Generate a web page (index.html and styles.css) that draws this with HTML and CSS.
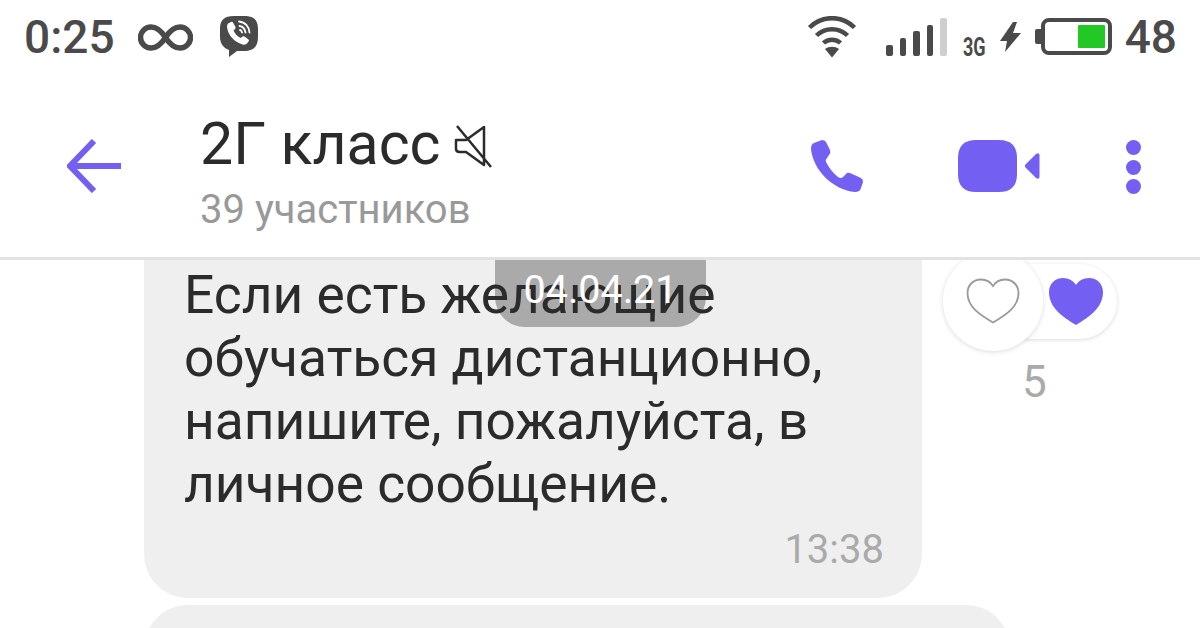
FILE: index.html
```html
<!DOCTYPE html>
<html lang="ru">
<head>
    <meta charset="UTF-8">
    <meta name="viewport" content="width=device-width, initial-scale=1.0">
    <title>2Г класс</title>
    <link rel="stylesheet" href="styles.css">
</head>
<body>
    <div class="status">
        <span class="clock">0:25</span>
        <svg class="ic-inf" width="55" height="27" viewBox="0 0 55 27"><path d="M27.5 13.5C23 6.500 19 3 13 3a10.500 10.500 0 0 0 0 21C19 24 23 20.500 27.500 13.500S36 3 42 3a10.500 10.500 0 0 1 0 21C36 24 32 20.500 27.500 13.500Z" fill="none" stroke="#4a4a4a" stroke-width="5.500"/></svg>
        <svg class="ic-viber" width="38" height="41" viewBox="0 0 38 41">
            <path d="M14 0h10c10 0 14 4 14 13v8c0 10-5 14-14 14h-7l-8 6v-7C3 32 0 27 0 21v-8C0 4 4 0 14 0Z" fill="#4a4a4a"/>
            <path d="M8 7.500l3-1.500q1.500-.5 2 .5l2.500 4.500q.5 1-.5 2l-1.500 1.500q2 4.500 7 7.500l2-1.500q1-.5 2 0l4 3q1 1 0 2l-2 2.500q-2 1-4 .5C14 26 8 19 7 11q0-2.500 1-3.500Z" fill="#fff"/>
            <path d="M19 5.500c6 .5 10 5 10.500 11M19.500 10c3.500 .5 5.500 3 6 6.500M20 14c1.500 .3 1.800 1 2 2.500" fill="none" stroke="#fff" stroke-width="1.800" stroke-linecap="round"/>
        </svg>
        <div class="spacer"></div>
        <svg class="ic-wifi" width="50" height="42" viewBox="0 0 50 42">
            <path d="M2.500 11.500C15-1 35-1 47.500 11.500M9.500 19.500C18 11 32 11 40.500 19.500M16.500 27C21 22.500 29 22.500 33.500 27" fill="none" stroke="#4a4a4a" stroke-width="4.500"/>
            <path d="M18 33c4-3 10-3 14 0l-7 8.500Z" fill="#4a4a4a"/>
        </svg>
        <div class="signal">
            <i class="bar b1"></i><i class="bar b2"></i><i class="bar b3"></i><i class="bar b4"></i><i class="bar b5"></i>
        </div>
        <span class="net">3G</span>
        <svg class="ic-bolt" width="21" height="30" viewBox="0 0 21 30"><path d="M13 0L0 19h7L5 30l16-19h-8l4-11Z" fill="#4a4a4a"/></svg>
        <div class="battery"><div class="battery-level"></div></div>
        <span class="percent">48</span>
    </div>

    <div class="header">
        <svg class="ic-back" width="54" height="54" viewBox="0 0 54 54"><path d="M27 2L3 27l24 25M3 27h51" fill="none" stroke="#7360f2" stroke-width="6"/></svg>
        <div class="chat-info">
            <div class="chat-title">
                <span>2Г класс</span>
                <svg width="38" height="44" viewBox="0 0 38 44"><path d="M2 16l10 0L30 3v38L12 28H6q-4 0-4-3ZM3 2l34 41" fill="none" stroke="#2b2b2b" stroke-width="2.500" stroke-linejoin="round"/></svg>
            </div>
            <div class="chat-sub">39 участников</div>
        </div>
        <svg class="ic-phone" width="52" height="52" viewBox="0 0 52 52"><path d="M3 3Q0 4 0 9C2 30 22 50 44 52Q49 52 50 48L52 42Q52 39 50 38L39 33Q36 32 35 34L32 37Q30 39 27 37C22 33 18 28 15 22Q14 20 16 18L18 15Q20 13 19 10L15 2Q14 0 11 0Z" fill="#7360f2"/></svg>
        <svg class="ic-video" width="82" height="52" viewBox="0 0 82 52"><path d="M18 0h23c12 0 18 6 18 18v16c0 12-6 18-18 18H18C6 52 0 46 0 34V18C0 6 6 0 18 0Z" fill="#7360f2"/><path d="M67.500 24.500L78 14q3-2 3.500 1v22q-.5 3-3.500 1L67.500 27.500q-1.500-1.500 0-3Z" fill="#7360f2"/></svg>
        <div class="dots"><i></i><i></i><i></i></div>
    </div>

    <div class="chat">
        <div class="date-pill"><span>04.04.21</span></div>
        <div class="msg-row">
            <div class="bubble">
                <p class="msg-text">Если есть желающие обучаться дистанционно, напишите, пожалуйста, в личное сообщение.</p>
                <div class="msg-time">13:38</div>
            </div>
            <div class="likes">
                <div class="like-row">
                    <div class="like-circle">
                        <svg width="54" height="46" viewBox="0 0 54 46"><path d="M27 44.500C14 37 1.500 29 1.500 15 1.500 7 7.500 1.500 15 1.500 20 1.500 24.500 4 27 8 29.500 4 34 1.500 39 1.500 46.500 1.500 52.500 7 52.500 15 52.500 29 40 37 27 44.500Z" fill="#fff" stroke="#9a9a9a" stroke-width="1.800"/></svg>
                    </div>
                    <div class="like-pill">
                        <svg width="54" height="47" viewBox="0 0 54 47"><path d="M27 47C14 39 0 30 0 14 0 6 6 0 14 0 20 0 24.500 3 27 7 29.500 3 34 0 40 0 48 0 54 6 54 14 54 30 40 39 27 47Z" fill="#7360f2"/></svg>
                    </div>
                </div>
                <div class="like-count">5</div>
            </div>
        </div>
        <div class="bubble-next"></div>
    </div>
</body>
</html>
```

FILE: styles.css
```css
* {
    margin: 0;
    padding: 0;
    box-sizing: border-box;
}

body {
    width: 1200px;
    height: 628px;
    overflow: hidden;
    background-color: #fff;
    font-family: Roboto, "Liberation Sans", sans-serif;
    color: #2b2b2b;
}

/* status bar */
.status {
    height: 75px;
    padding: 0 23px 0 24px;
    display: flex;
    align-items: flex-start;
    color: #4a4a4a;
}

.clock {
    margin-top: 10px;
    font-size: 46px;
    line-height: 54px;
    font-weight: 500;
    width: 89px;
}

.ic-inf {
    margin: 24px 0 0 25px;
}

.ic-viber {
    margin: 16px 0 0 27px;
}

.spacer {
    flex: 1;
}

.ic-wifi {
    margin-top: 16px;
}

.signal {
    margin: 18px 0 0 29px;
    height: 38px;
    display: flex;
    align-items: flex-end;
    gap: 7px;
}

.bar {
    width: 6.500px;
    background-color: #4a4a4a;
    border-radius: 2px;
}

.b1 { height: 11px; }
.b2 { height: 18px; }
.b3 { height: 25px; }
.b4 { height: 31px; }
.b5 { height: 38px; background-color: #cfcfcf; }

.net {
    margin: 35px 0 0 16px;
    width: 24px;
    font-size: 25px;
    line-height: 26px;
    font-weight: 700;
    transform: scaleX(.72);
    transform-origin: left center;
}

.ic-bolt {
    margin: 22px 0 0 13px;
}

.battery {
    margin: 18px 0 0 20px;
    width: 71px;
    height: 37px;
    padding: 3px;
    border: 4px solid #4a4a4a;
    border-radius: 8px;
    display: flex;
    justify-content: flex-end;
    position: relative;
}

.battery::before {
    content: "";
    position: absolute;
    left: -10px;
    top: 7px;
    width: 6px;
    height: 15px;
    background-color: #4a4a4a;
    border-radius: 2px 0 0 2px;
}

.battery-level {
    width: 27px;
    background-color: #22c924;
    border-radius: 1px;
}

.percent {
    margin: 10px 0 0 13px;
    font-size: 46px;
    line-height: 54px;
    font-weight: 500;
}

/* header */
.header {
    height: 185px;
    border-bottom: 3px solid #e2e2e2;
    display: flex;
    align-items: flex-start;
}

.ic-back {
    margin: 64px 0 0 67px;
}

.chat-info {
    margin: 31px 0 0 79px;
    flex: 1;
}

.chat-title {
    display: flex;
    align-items: flex-start;
    font-size: 59px;
    line-height: 76px;
}

.chat-title svg {
    margin: 18px 0 0 14px;
}

.chat-sub {
    margin-top: 6px;
    font-size: 40px;
    line-height: 44px;
    color: #999;
}

.ic-phone {
    margin-top: 65px;
}

.ic-video {
    margin: 65px 0 0 95px;
}

.dots {
    margin: 65px 59px 0 86px;
    display: flex;
    flex-direction: column;
    gap: 4.500px;
}

.dots i {
    width: 15px;
    height: 15px;
    border-radius: 50%;
    background-color: #7360f2;
}

/* messages */
.chat {
    height: 368px;
    overflow: hidden;
    position: relative;
}

.date-pill {
    position: absolute;
    left: 495px;
    top: 0;
    width: 211px;
    height: 67px;
    padding-top: 5px;
    background-color: #aaa;
    border-radius: 0 0 30px 30px;
    text-align: center;
}

.date-pill span {
    position: relative;
    z-index: 2;
    font-size: 39.500px;
    line-height: 50px;
    color: #fff;
}

.msg-row {
    display: flex;
    align-items: flex-start;
    padding-left: 144px;
}

.bubble {
    width: 778px;
    height: 338px;
    padding: 4px 38px 0 40px;
    background-color: #efefef;
    border-radius: 0 0 44px 44px;
}

.msg-text {
    position: relative;
    z-index: 1;
    font-size: 53.300px;
    line-height: 63px;
}

.msg-time {
    margin-top: 9px;
    text-align: right;
    font-size: 40px;
    line-height: 50px;
    color: #aaa;
}

.likes {
    margin: -9px 0 0 21px;
}

.like-row {
    display: flex;
    align-items: center;
}

.like-circle {
    position: relative;
    z-index: 1;
    width: 100px;
    height: 100px;
    border-radius: 50%;
    background-color: #fff;
    box-shadow: 0 1px 5px rgba(0, 0, 0, .14);
    display: flex;
    align-items: center;
    justify-content: center;
}

.like-pill {
    margin-left: -50px;
    width: 124px;
    height: 75px;
    padding-right: 14px;
    border-radius: 38px;
    background-color: #fff;
    box-shadow: 0 1px 4px rgba(0, 0, 0, .14);
    display: flex;
    align-items: center;
    justify-content: flex-end;
}

.like-count {
    margin: 6px 0 0 79px;
    font-size: 44px;
    line-height: 50px;
    color: #aaa;
}

.bubble-next {
    margin: 7px 0 0 144px;
    width: 866px;
    height: 80px;
    background-color: #efefef;
    border-radius: 44px 44px 0 0;
}
```
